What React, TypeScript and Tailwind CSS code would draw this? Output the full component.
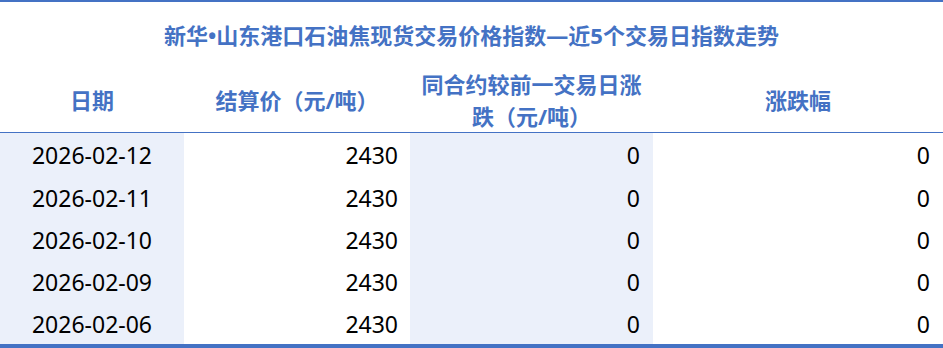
import React from 'react';

const rows = [
    { date: '2026-02-12', price: '2430', change: '0', pct: '0' },
    { date: '2026-02-11', price: '2430', change: '0', pct: '0' },
    { date: '2026-02-10', price: '2430', change: '0', pct: '0' },
    { date: '2026-02-09', price: '2430', change: '0', pct: '0' },
    { date: '2026-02-06', price: '2430', change: '0', pct: '0' },
];

const font = { fontFamily: '"Noto Sans", "Noto Sans CJK SC", sans-serif' };

export default function App() {
    return (
        <div className="w-[943px] h-[348px] bg-white overflow-hidden" style={font}>
            <div className="border-t-2 border-b-4 border-[#4472c4]">
                {/* title */}
                <div className="h-[66px] flex items-center justify-center text-[22px] font-bold text-[#4472c4]">
                    新华•山东港口石油焦现货交易价格指数—近5个交易日指数走势
                </div>

                {/* header */}
                <div className="grid grid-cols-[184px_226px_243px_1fr] h-[65px] border-b border-[#4472c4] text-[22px] font-bold text-[#4472c4] leading-[32px]">
                    <div className="flex items-center justify-center">日期</div>
                    <div className="flex items-center justify-center">结算价（元/吨）</div>
                    <div className="flex items-center justify-center text-center px-[11px]">同合约较前一交易日涨跌（元/吨）</div>
                    <div className="flex items-center justify-center">涨跌幅</div>
                </div>

                {/* body */}
                <div className="text-[23px] text-black">
                    {rows.map((r) => (
                        <div key={r.date} className="grid grid-cols-[184px_226px_243px_1fr] h-[42.2px]">
                            <div className="bg-[#ebf0fa] flex items-center justify-center pt-[3px]">{r.date}</div>
                            <div className="flex items-center justify-end pr-[12px] pt-[3px]">{r.price}</div>
                            <div className="bg-[#ebf0fa] flex items-center justify-end pr-[13px] pt-[3px]">{r.change}</div>
                            <div className="flex items-center justify-end pr-[13px] pt-[3px]">{r.pct}</div>
                        </div>
                    ))}
                </div>
            </div>
        </div>
    );
}
